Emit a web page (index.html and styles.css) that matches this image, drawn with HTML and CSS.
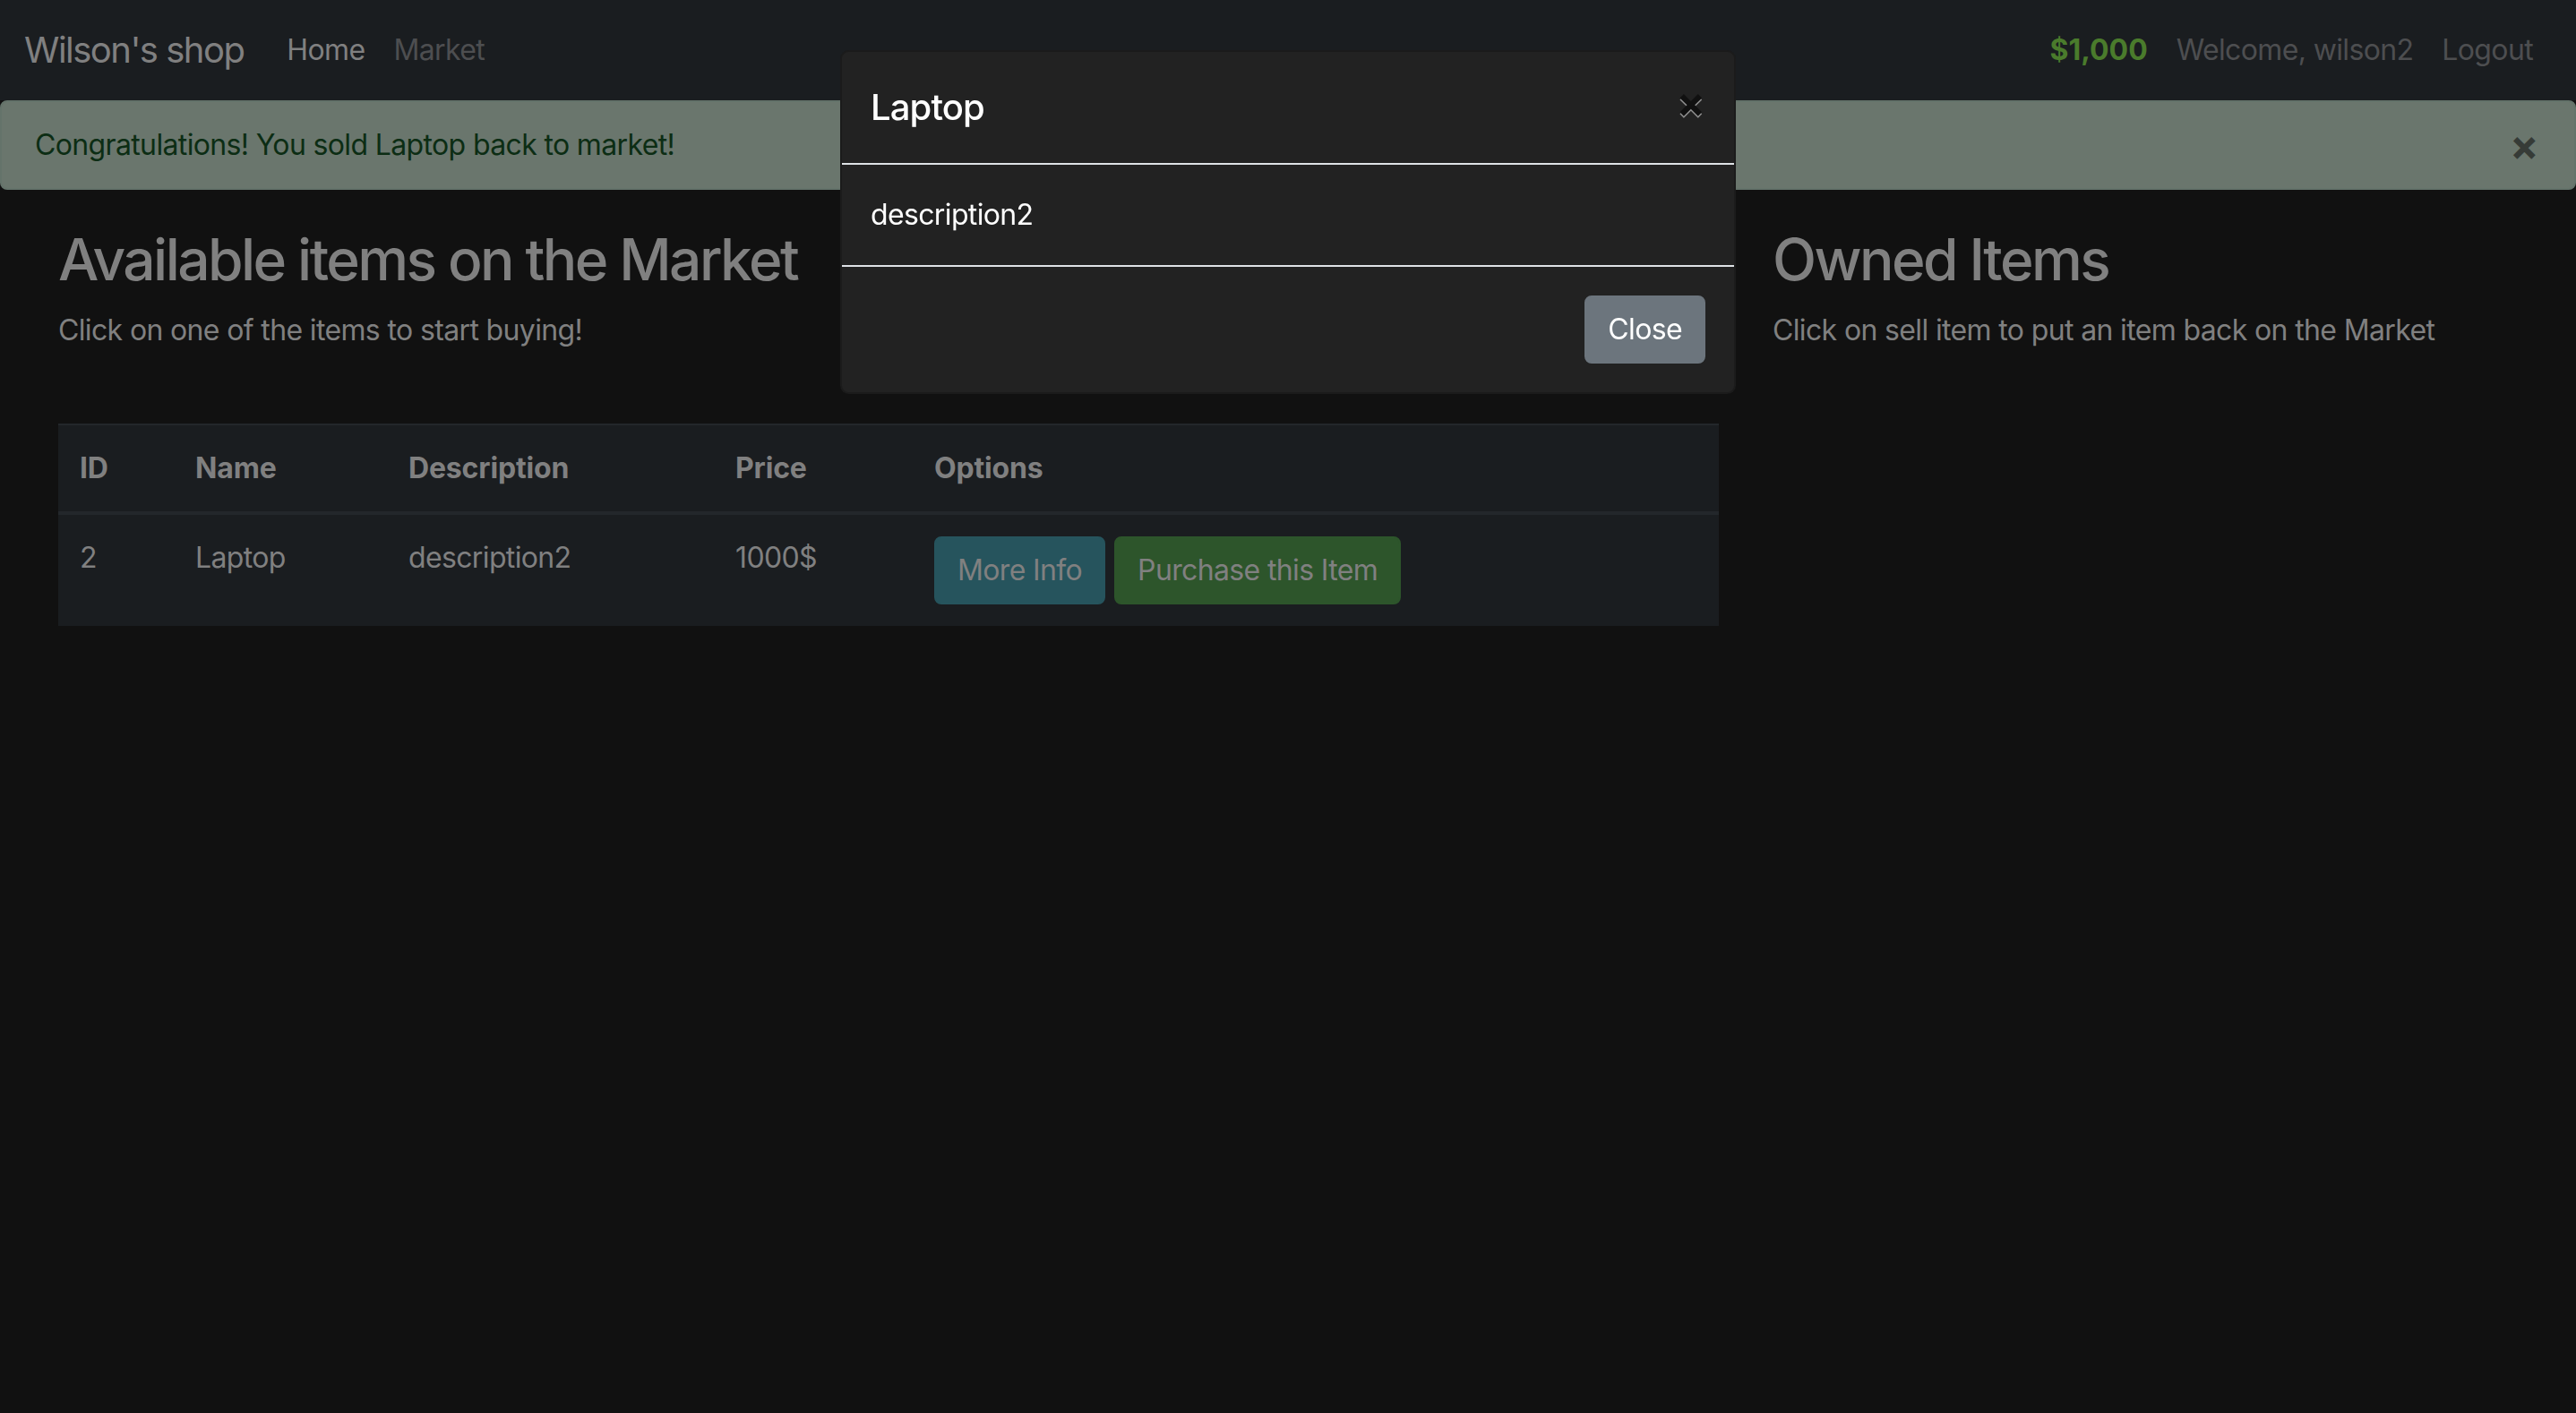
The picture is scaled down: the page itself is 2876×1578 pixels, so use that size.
FILE: index.html
```html
<!DOCTYPE html>
<html lang="en">
<head>
<meta charset="utf-8">
<title>Wilson's shop - Market</title>
<link rel="stylesheet" href="styles.css">
</head>
<body>
<nav class="navbar">
  <a class="brand" href="#">Wilson's shop</a>
  <ul class="nav">
    <li><a class="nav-link active" href="#">Home</a></li>
    <li><a class="nav-link" href="#">Market</a></li>
  </ul>
  <ul class="nav nav-right">
    <li><a class="nav-link budget" href="#">$1,000</a></li>
    <li><a class="nav-link" href="#">Welcome, wilson2</a></li>
    <li><a class="nav-link" href="#">Logout</a></li>
  </ul>
</nav>

<div class="alert">
  Congratulations! You sold Laptop back to market!
  <button class="alert-close" type="button">×</button>
</div>

<div class="row">
  <div class="col-8">
    <h2 class="heading">Available items on the Market</h2>
    <p class="lead-text">Click on one of the items to start buying!</p>
    <br>
    <table class="table">
      <thead>
        <tr>
          <th class="c-id">ID</th>
          <th class="c-name">Name</th>
          <th class="c-desc">Description</th>
          <th class="c-price">Price</th>
          <th class="c-opt">Options</th>
        </tr>
      </thead>
      <tbody>
        <tr>
          <td>2</td>
          <td>Laptop</td>
          <td>description2</td>
          <td>1000$</td>
          <td>
            <div class="btn-group">
              <button class="btn btn-info" type="button">More Info</button>
              <button class="btn btn-success" type="button">Purchase this Item</button>
            </div>
          </td>
        </tr>
      </tbody>
    </table>
  </div>
  <div class="col-4">
    <h2 class="heading">Owned Items</h2>
    <p class="lead-text">Click on sell item to put an item back on the Market</p>
    <br>
  </div>
</div>

<div class="modal">
  <div class="modal-dialog">
    <div class="modal-content">
      <div class="modal-header">
        <h5 class="modal-title">Laptop</h5>
        <button class="modal-close" type="button">×</button>
      </div>
      <div class="modal-body">description2</div>
      <div class="modal-footer">
        <button class="btn btn-secondary" type="button">Close</button>
      </div>
    </div>
  </div>
</div>
</body>
</html>
```
FILE: styles.css
```css
* { box-sizing: border-box; }
html, body { margin: 0; padding: 0; }
body {
  background: #111111;
  color: #808080;
  font-family: "Inter", "Liberation Sans", sans-serif;
  font-size: 32px;
  line-height: 48px;
  letter-spacing: -0.02em;
  overflow: hidden;
  width: 2876px;
  height: 1578px;
}
a { text-decoration: none; }
ul { list-style: none; margin: 0; padding: 0; }
button { font-family: inherit; letter-spacing: inherit; }

/* navbar */
.navbar {
  display: flex;
  align-items: center;
  height: 112px;
  padding: 16px 32px 16px 27px;
  background: #1a1d20;
}
.brand {
  font-size: 40px;
  line-height: 60px;
  padding: 10px 0;
  margin-right: 32px;
  color: #808080;
  letter-spacing: -0.038em;
}
.nav { display: flex; }
.nav-right { margin-left: auto; }
.nav-link {
  display: block;
  padding: 16px 16px;
  line-height: 48px;
  color: #4d4e50;
}
.nav-link.active { color: #808080; }
.nav-link.budget { color: #4a7b2c; font-weight: 700; letter-spacing: 0; }

/* alert */
.alert {
  position: relative;
  height: 100px;
  padding: 24px 40px 24px 37px;
  background: #6a766d;
  border: 2px solid #64736a;
  border-radius: 8px;
  color: #0c2d14;
}
.alert-close {
  position: absolute;
  top: 0;
  right: 0;
  padding: 24px 40px;
  border: 0;
  background: transparent;
  font-size: 48px;
  font-weight: 700;
  line-height: 48px;
  color: #363b37;
}

/* main row */
.row {
  display: flex;
  margin: 40px -30px 0 35px;
}
.col-8 { flex: 0 0 66.6667%; padding: 0 30px; }
.col-4 { flex: 0 0 33.3333%; padding: 0 30px; }
.heading {
  margin: 0 0 16px;
  font-size: 64px;
  line-height: 76.8px;
  font-weight: 500;
  letter-spacing: -0.04em;
  color: #808080;
}
.lead-text { margin: 0 0 32px; }

/* table */
.table {
  width: 100%;
  border-collapse: collapse;
  table-layout: fixed;
  background: #1a1d20;
  color: #808080;
}
.table th, .table td {
  padding: 24px;
  text-align: left;
  vertical-align: top;
  border-top: 2px solid #23272b;
}
.table th { font-weight: 700; letter-spacing: -0.005em; border-bottom: 4px solid #23272b; }
.c-id { width: 129px; }
.c-name { width: 238px; }
.c-desc { width: 365px; }
.c-price { width: 222px; }
.btn-group { display: flex; gap: 10px; }
.btn {
  display: inline-block;
  padding: 12px 24px;
  font-size: 32px;
  line-height: 48px;
  border: 2px solid transparent;
  border-radius: 8px;
  font-weight: 400;
}
.btn-info { background: #26545d; border-color: #26545d; color: #808080; }
.btn-success { background: #2d552b; border-color: #2d552b; color: #808080; }
.btn-secondary { background: #6c757d; border-color: #6c757d; color: #ffffff; }

/* modal */
.modal {
  position: fixed;
  inset: 0;
}
.modal-dialog {
  width: 1000px;
  margin: 56px auto;
}
.modal-content {
  background: #222222;
  border: 2px solid rgba(0, 0, 0, 0.2);
  border-radius: 9.6px;
  color: #ffffff;
}
.modal-header {
  display: flex;
  align-items: flex-start;
  padding: 32px;
  border-bottom: 2px solid #dee2e6;
}
.modal-title {
  margin: 0;
  font-size: 40px;
  line-height: 60px;
  font-weight: 500;
  letter-spacing: -0.022em;
}
.modal-close {
  margin: -32px -32px -32px auto;
  padding: 32px;
  border: 0;
  background: transparent;
  font-size: 48px;
  font-weight: 700;
  line-height: 48px;
  letter-spacing: 0;
  color: #000000;
  text-shadow: 0 2px 0 #ffffff;
  opacity: 0.5;
}
.modal-body { padding: 32px; }
.modal-footer {
  display: flex;
  justify-content: flex-end;
  padding: 32px;
  border-top: 2px solid #dee2e6;
}
```
